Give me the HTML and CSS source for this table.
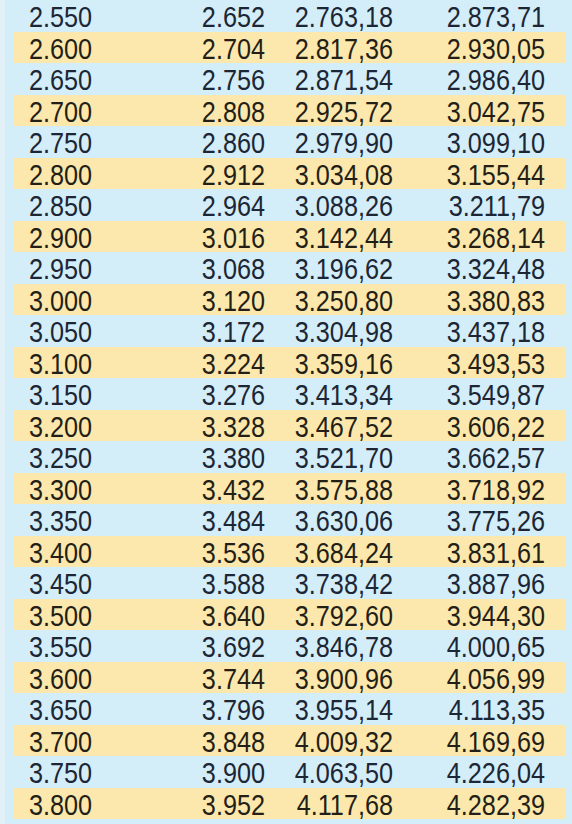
FILE: index.html
```
<!DOCTYPE html>
<html lang="de">
<head>
<meta charset="utf-8">
<title>Tabelle</title>
<link rel="stylesheet" href="styles.css">
</head>
<body>
<div class="page">
  <div class="edge"></div>
  <div class="table">
    <div class="row"><span class="c1">2.550</span><span>2.652</span><span>2.763,18</span><span>2.873,71</span></div>
    <div class="row alt"><span class="c1">2.600</span><span>2.704</span><span>2.817,36</span><span>2.930,05</span></div>
    <div class="row"><span class="c1">2.650</span><span>2.756</span><span>2.871,54</span><span>2.986,40</span></div>
    <div class="row alt"><span class="c1">2.700</span><span>2.808</span><span>2.925,72</span><span>3.042,75</span></div>
    <div class="row"><span class="c1">2.750</span><span>2.860</span><span>2.979,90</span><span>3.099,10</span></div>
    <div class="row alt"><span class="c1">2.800</span><span>2.912</span><span>3.034,08</span><span>3.155,44</span></div>
    <div class="row"><span class="c1">2.850</span><span>2.964</span><span>3.088,26</span><span>3.211,79</span></div>
    <div class="row alt"><span class="c1">2.900</span><span>3.016</span><span>3.142,44</span><span>3.268,14</span></div>
    <div class="row"><span class="c1">2.950</span><span>3.068</span><span>3.196,62</span><span>3.324,48</span></div>
    <div class="row alt"><span class="c1">3.000</span><span>3.120</span><span>3.250,80</span><span>3.380,83</span></div>
    <div class="row"><span class="c1">3.050</span><span>3.172</span><span>3.304,98</span><span>3.437,18</span></div>
    <div class="row alt"><span class="c1">3.100</span><span>3.224</span><span>3.359,16</span><span>3.493,53</span></div>
    <div class="row"><span class="c1">3.150</span><span>3.276</span><span>3.413,34</span><span>3.549,87</span></div>
    <div class="row alt"><span class="c1">3.200</span><span>3.328</span><span>3.467,52</span><span>3.606,22</span></div>
    <div class="row"><span class="c1">3.250</span><span>3.380</span><span>3.521,70</span><span>3.662,57</span></div>
    <div class="row alt"><span class="c1">3.300</span><span>3.432</span><span>3.575,88</span><span>3.718,92</span></div>
    <div class="row"><span class="c1">3.350</span><span>3.484</span><span>3.630,06</span><span>3.775,26</span></div>
    <div class="row alt"><span class="c1">3.400</span><span>3.536</span><span>3.684,24</span><span>3.831,61</span></div>
    <div class="row"><span class="c1">3.450</span><span>3.588</span><span>3.738,42</span><span>3.887,96</span></div>
    <div class="row alt"><span class="c1">3.500</span><span>3.640</span><span>3.792,60</span><span>3.944,30</span></div>
    <div class="row"><span class="c1">3.550</span><span>3.692</span><span>3.846,78</span><span>4.000,65</span></div>
    <div class="row alt"><span class="c1">3.600</span><span>3.744</span><span>3.900,96</span><span>4.056,99</span></div>
    <div class="row"><span class="c1">3.650</span><span>3.796</span><span>3.955,14</span><span>4.113,35</span></div>
    <div class="row alt"><span class="c1">3.700</span><span>3.848</span><span>4.009,32</span><span>4.169,69</span></div>
    <div class="row"><span class="c1">3.750</span><span>3.900</span><span>4.063,50</span><span>4.226,04</span></div>
    <div class="row alt"><span class="c1">3.800</span><span>3.952</span><span>4.117,68</span><span>4.282,39</span></div>
  </div>
</div>
</body>
</html>
```
FILE: styles.css
```
html, body {
  margin: 0;
  padding: 0;
  background: #d3edf9;
}
.page {
  display: flex;
  width: 572px;
  height: 824px;
  overflow: hidden;
  background: #d3edf9;
}
.edge {
  width: 5px;
  flex: none;
  background: #e2f1f8;
}
.table {
  flex: 1;
  padding: 0 7px 0 9px;
}
.row {
  display: grid;
  grid-template-columns: 100px 136px 128px 152px;
  height: 31.5px;
  box-sizing: border-box;
  padding: 2px 15px 0 15px;
  line-height: 31.5px;
  font-family: "Liberation Sans", Arial, sans-serif;
  font-size: 29px;
  color: #1c2634;
  white-space: nowrap;
}
.row span {
  text-align: right;
  transform: scaleX(0.87);
  transform-origin: right center;
}
.row .c1 {
  text-align: left;
  transform-origin: left center;
}
.row.alt {
  background: #fce8ac;
  color: #241f16;
}
```
